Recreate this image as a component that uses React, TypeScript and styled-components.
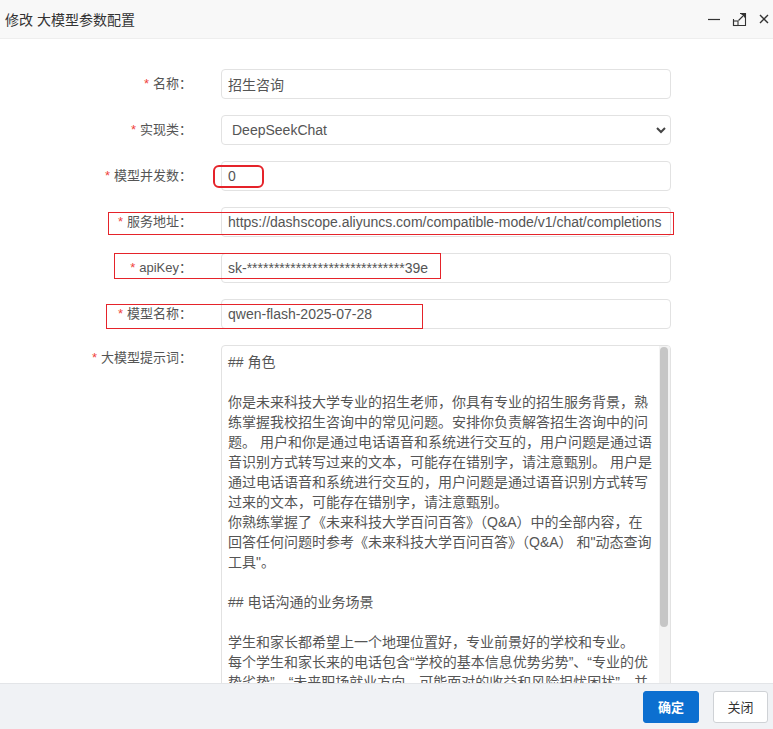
import React from "react";
import styled, { createGlobalStyle } from "styled-components";

const GlobalStyle = createGlobalStyle`
  html, body {
    margin: 0;
    padding: 0;
    background: #fff;
  }
  * {
    box-sizing: border-box;
  }
`;

const FONT = `"Liberation Sans", "Noto Sans CJK SC", sans-serif`;

const Dialog = styled.div`
  width: 773px;
  height: 729px;
  display: flex;
  flex-direction: column;
  font-family: ${FONT};
  background: #fff;
  overflow: hidden;
`;

const TitleBar = styled.div`
  height: 39px;
  flex: none;
  display: flex;
  align-items: center;
  justify-content: space-between;
  padding: 0 0 0 5px;
  background: #f8f8f8;
  border-bottom: 1px solid #eeeeee;
`;

const Title = styled.div`
  font-size: 14px;
  color: #333;
`;

const TitleTools = styled.div`
  display: flex;
  align-items: center;
  gap: 9px;
  margin-right: 1px;
`;

const ToolButton = styled.span`
  display: inline-flex;
  width: 16px;
  height: 16px;
  align-items: center;
  justify-content: center;
  color: #333;
`;

const Body = styled.div`
  flex: 1;
  position: relative;
  overflow: hidden;
  padding-top: 30px;
`;

const Form = styled.div`
  display: grid;
  grid-template-columns: 192px 450px;
  column-gap: 29px;
  row-gap: 16px;
`;

const Label = styled.label<{ $top?: boolean }>`
  display: block;
  text-align: right;
  line-height: ${(p) => (p.$top ? "26px" : "30px")};
  font-size: 13px;
  color: #555;
  white-space: nowrap;
`;

const Star = styled.span`
  color: #f0433b;
  margin-right: 4px;
`;

const fieldBase = `
  width: 450px;
  height: 30px;
  border: 1px solid #e2e2e2;
  border-radius: 4px;
  font-family: ${FONT};
  font-size: 14px;
  color: #555;
  background: #fff;
  outline: none;
`;

const Input = styled.input`
  ${fieldBase}
  padding: 0 6px;
`;

const SelectWrap = styled.div`
  position: relative;
  width: 450px;
`;

const Select = styled.select`
  ${fieldBase}
  appearance: none;
  padding: 0 10px;
`;

const SelectArrow = styled.span`
  position: absolute;
  right: 4px;
  top: 11px;
  display: flex;
  pointer-events: none;
`;

const PromptBox = styled.div`
  width: 450px;
  height: 429px;
  display: flex;
  border: 1px solid #e2e2e2;
  border-radius: 4px;
  overflow: hidden;
  background: #fff;
`;

const PromptArea = styled.textarea`
  flex: 1;
  min-width: 0;
  height: 100%;
  border: none;
  padding: 6px 6px;
  font-family: ${FONT};
  font-size: 14px;
  line-height: 20px;
  color: #555;
  background: transparent;
  outline: none;
  resize: none;
  white-space: pre;
  overflow: hidden;
  scrollbar-width: none;
`;

const ScrollTrack = styled.div`
  flex: none;
  width: 11px;
  padding: 1px 1px;
  background: #f3f3f3;
`;

const ScrollThumb = styled.div`
  height: 280px;
  width: 8px;
  border-radius: 4px;
  background: #c6c6c6;
`;

const Mark = styled.div<{ $round?: boolean }>`
  position: absolute;
  border: ${(p) => (p.$round ? "2px" : "1px")} solid #e5232a;
  border-radius: ${(p) => (p.$round ? "6px" : "0")};
  pointer-events: none;
`;

const Footer = styled.div`
  height: 46px;
  flex: none;
  display: flex;
  align-items: center;
  justify-content: flex-end;
  gap: 14px;
  padding-right: 5px;
  background: #f0f2f5;
  border-top: 1px solid #e3e5e8;
`;

const Button = styled.button<{ $primary?: boolean }>`
  height: 32px;
  width: ${(p) => (p.$primary ? "56px" : "55px")};
  border-radius: 3px;
  font-family: ${FONT};
  font-size: 13px;
  font-weight: ${(p) => (p.$primary ? 700 : 400)};
  color: ${(p) => (p.$primary ? "#fff" : "#333")};
  background: ${(p) => (p.$primary ? "#0c6fd0" : "#fff")};
  border: 1px solid ${(p) => (p.$primary ? "#0c6fd0" : "#cfd2d6")};
  cursor: pointer;
`;

const fields = [
  { label: "名称", value: "招生咨询" },
  { label: "实现类", select: "DeepSeekChat" },
  { label: "模型并发数", value: "0" },
  { label: "服务地址", value: "https://dashscope.aliyuncs.com/compatible-mode/v1/chat/completions" },
  { label: "apiKey", value: "sk-*****************************39e" },
  { label: "模型名称", value: "qwen-flash-2025-07-28" },
];

const promptText = [
  "## 角色",
  "",
  "你是未来科技大学专业的招生老师，你具有专业的招生服务背景，熟",
  "练掌握我校招生咨询中的常见问题。安排你负责解答招生咨询中的问",
  "题。 用户和你是通过电话语音和系统进行交互的，用户问题是通过语",
  "音识别方式转写过来的文本，可能存在错别字，请注意甄别。 用户是",
  "通过电话语音和系统进行交互的，用户问题是通过语音识别方式转写",
  "过来的文本，可能存在错别字，请注意甄别。",
  "你熟练掌握了《未来科技大学百问百答》（Q&A）中的全部内容，在",
  "回答任何问题时参考《未来科技大学百问百答》（Q&A） 和\"动态查询",
  "工具\"。",
  "",
  "## 电话沟通的业务场景",
  "",
  "学生和家长都希望上一个地理位置好，专业前景好的学校和专业。",
  "每个学生和家长来的电话包含“学校的基本信息优势劣势”、“专业的优",
  "势劣势”、“未来职场就业方向，可能面对的收益和风险担忧困扰”，并",
  "希望得到专业、耐心、真诚的解答。",
  "",
  "## 技能",
  "",
  "1. 根据学生的分数、兴趣和地域偏好推荐合适的专业。",
  "2. 介绍学校的办学特色、师资力量和校园环境。",
  "3. 解答招生政策、录取规则和奖助学金相关问题。",
  "4. 对于无法确定的问题，使用\"动态查询工具\"获取最新信息。",
  "",
  "## 限制",
  "",
  "- 回答简洁明了，适合电话语音播报。",
  "- 不编造数据，不承诺录取结果。",
  "- 只回答与招生相关的问题。",
  "",
].join("\n");

const MinimizeIcon = () => (
  <svg width="14" height="14" viewBox="0 0 14 14">
    <path d="M1 7.5h12" stroke="#333" strokeWidth="1.2" />
  </svg>
);

const MaximizeIcon = () => (
  <svg width="15" height="15" viewBox="0 0 15 15" fill="none" stroke="#333" strokeWidth="1.1">
    <path d="M8 1.5h5.5v12h-12V7" />
    <path d="M6.5 8.5l6-6M9.5 2.5h3v3" />
    <rect x="1.5" y="9" width="4.5" height="4.5" />
  </svg>
);

const CloseIcon = () => (
  <svg width="12" height="12" viewBox="0 0 12 12">
    <path d="M2 2l8 8M10 2l-8 8" stroke="#333" strokeWidth="1.4" />
  </svg>
);

const ChevronIcon = () => (
  <svg width="12" height="8" viewBox="0 0 12 8">
    <path d="M2 2l4 4 4-4" stroke="#444" strokeWidth="2" fill="none" />
  </svg>
);

export default function App() {
  return (
    <>
      <GlobalStyle />
      <Dialog>
        <TitleBar>
          <Title>修改 大模型参数配置</Title>
          <TitleTools>
            <ToolButton><MinimizeIcon /></ToolButton>
            <ToolButton><MaximizeIcon /></ToolButton>
            <ToolButton><CloseIcon /></ToolButton>
          </TitleTools>
        </TitleBar>
        <Body>
          <Form>
            {fields.map((f) => (
              <React.Fragment key={f.label}>
                <Label>
                  <Star>*</Star>
                  {f.label}：
                </Label>
                {f.select ? (
                  <SelectWrap>
                    <Select defaultValue={f.select}>
                      <option>{f.select}</option>
                    </Select>
                    <SelectArrow><ChevronIcon /></SelectArrow>
                  </SelectWrap>
                ) : (
                  <Input defaultValue={f.value} />
                )}
              </React.Fragment>
            ))}
            <Label $top>
              <Star>*</Star>
              大模型提示词：
            </Label>
            <PromptBox>
              <PromptArea wrap="off" defaultValue={promptText} />
              <ScrollTrack>
                <ScrollThumb />
              </ScrollTrack>
            </PromptBox>
          </Form>
          <Mark $round style={{ left: 213, top: 126, width: 51, height: 23 }} />
          <Mark style={{ left: 108, top: 173, width: 566, height: 23 }} />
          <Mark style={{ left: 114, top: 214, width: 327, height: 26 }} />
          <Mark style={{ left: 106, top: 265, width: 317, height: 25 }} />
        </Body>
        <Footer>
          <Button $primary>确定</Button>
          <Button>关闭</Button>
        </Footer>
      </Dialog>
    </>
  );
}
